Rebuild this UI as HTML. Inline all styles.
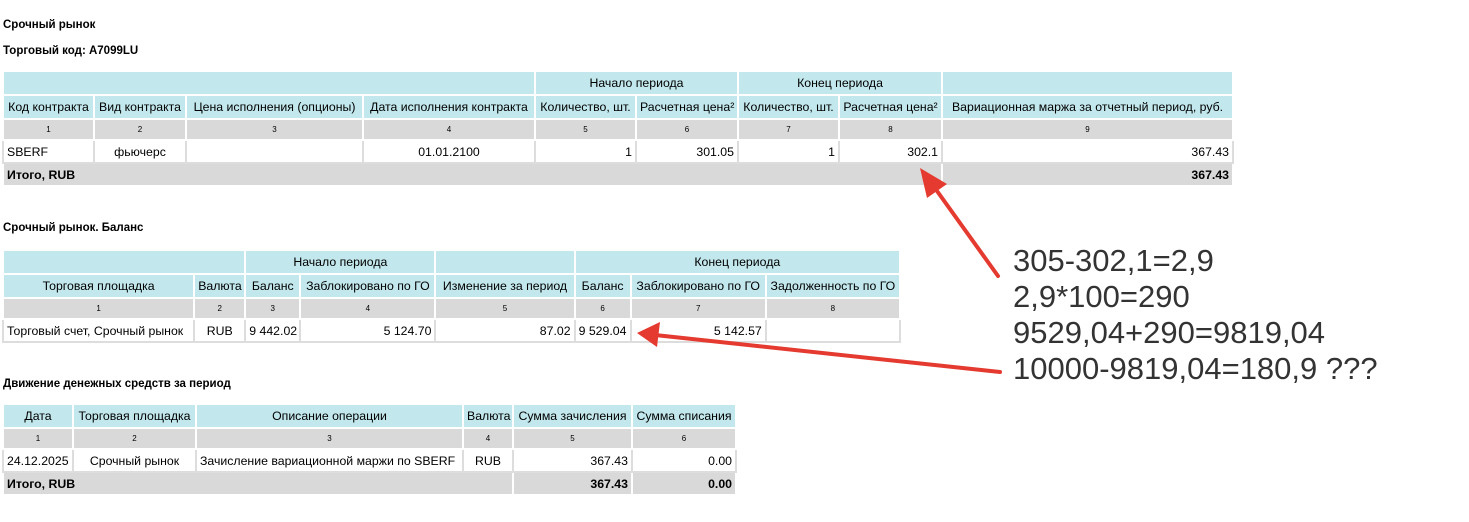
<!DOCTYPE html>
<html><head><meta charset="utf-8"><style>
body{margin:0;background:#fff;width:1469px;height:522px;overflow:hidden;position:relative;font-family:"Liberation Sans",Arial,sans-serif;color:#000}
.t{position:absolute;font-weight:bold;font-size:11.5px;left:3px}
table{position:absolute;border-collapse:collapse;table-layout:fixed;font-size:12.3px}
td{border:2px solid #fff;padding:0 3px;white-space:nowrap;overflow:hidden;height:21px;box-sizing:border-box}
tr.h td{background:#c2e7ec;text-align:center;height:24px}
tr.n td{background:#d9d9d9;text-align:center;font-size:8px;height:21px}
tr.d td{background:#fff;border-color:#ddd;text-align:right;height:23px}
tr.s td{background:#d9d9d9;font-weight:bold;text-align:right;height:23px}
.l{text-align:left!important}.c{text-align:center!important}
.ann{position:absolute;left:1013px;top:243px;font-size:31px;line-height:36px;color:#333}
</style></head><body>
<div class="t" style="top:19px">Срочный рынок</div>
<div class="t" style="top:45px">Торговый код: A7099LU</div>
<table style="left:2px;top:70px;width:1232px">
<colgroup><col style="width:91px"><col style="width:92px"><col style="width:177px"><col style="width:172px"><col style="width:101px"><col style="width:102px"><col style="width:101px"><col style="width:103px"><col style="width:291px"></colgroup>
<tr class="h"><td colspan="4"></td><td colspan="2">Начало периода</td><td colspan="2">Конец периода</td><td></td></tr>
<tr class="h"><td>Код контракта</td><td>Вид контракта</td><td>Цена исполнения (опционы)</td><td>Дата исполнения контракта</td><td>Количество, шт.</td><td>Расчетная цена²</td><td>Количество, шт.</td><td>Расчетная цена²</td><td>Вариационная маржа за отчетный период, руб.</td></tr>
<tr class="n"><td>1</td><td>2</td><td>3</td><td>4</td><td>5</td><td>6</td><td>7</td><td>8</td><td>9</td></tr>
<tr class="d"><td class="l">SBERF</td><td class="c">фьючерс</td><td></td><td class="c">01.01.2100</td><td>1</td><td>301.05</td><td>1</td><td>302.1</td><td>367.43</td></tr>
<tr class="s"><td colspan="8" class="l">Итого, RUB</td><td>367.43</td></tr>
</table>
<div class="t" style="top:222px">Срочный рынок. Баланс</div>
<table style="left:2px;top:249px;width:899px">
<colgroup><col style="width:191px"><col style="width:51px"><col style="width:55px"><col style="width:135px"><col style="width:139px"><col style="width:56px"><col style="width:135px"><col style="width:134px"></colgroup>
<tr class="h"><td colspan="2"></td><td colspan="2">Начало периода</td><td></td><td colspan="3">Конец периода</td></tr>
<tr class="h"><td>Торговая площадка</td><td>Валюта</td><td>Баланс</td><td>Заблокировано по ГО</td><td>Изменение за период</td><td>Баланс</td><td>Заблокировано по ГО</td><td>Задолженность по ГО</td></tr>
<tr class="n"><td>1</td><td>2</td><td>3</td><td>4</td><td>5</td><td>6</td><td>7</td><td>8</td></tr>
<tr class="d"><td class="l">Торговый счет, Срочный рынок</td><td class="c">RUB</td><td class="l">9 442.02</td><td>5 124.70</td><td>87.02</td><td class="l">9 529.04</td><td>5 142.57</td><td></td></tr>
</table>
<div class="t" style="top:378px">Движение денежных средств за период</div>
<table style="left:2px;top:403px;width:735px">
<colgroup><col style="width:70px"><col style="width:123px"><col style="width:267px"><col style="width:50px"><col style="width:119px"><col style="width:104px"></colgroup>
<tr class="h"><td>Дата</td><td>Торговая площадка</td><td>Описание операции</td><td>Валюта</td><td>Сумма зачисления</td><td>Сумма списания</td></tr>
<tr class="n"><td>1</td><td>2</td><td>3</td><td>4</td><td>5</td><td>6</td></tr>
<tr class="d"><td class="l">24.12.2025</td><td class="c">Срочный рынок</td><td class="l">Зачисление вариационной маржи по SBERF</td><td class="c">RUB</td><td>367.43</td><td>0.00</td></tr>
<tr class="s"><td colspan="4" class="l">Итого, RUB</td><td>367.43</td><td>0.00</td></tr>
</table>
<div class="ann">305-302,1=2,9<br>2,9*100=290<br>9529,04+290=9819,04<br>10000-9819,04=180,9 ???</div>
<svg style="position:absolute;left:0;top:0" width="1469" height="522">
<g stroke="#e53a2f" stroke-width="4" stroke-linecap="round" fill="#e53a2f">
<line x1="998" y1="276" x2="932" y2="184"/>
<line x1="1000" y1="372" x2="655" y2="335"/>
</g>
<polygon fill="#e53a2f" points="920,168 947,184 927,198"/>
<polygon fill="#e53a2f" points="637,333 660,322 657,347"/>
</svg>
</body></html>
